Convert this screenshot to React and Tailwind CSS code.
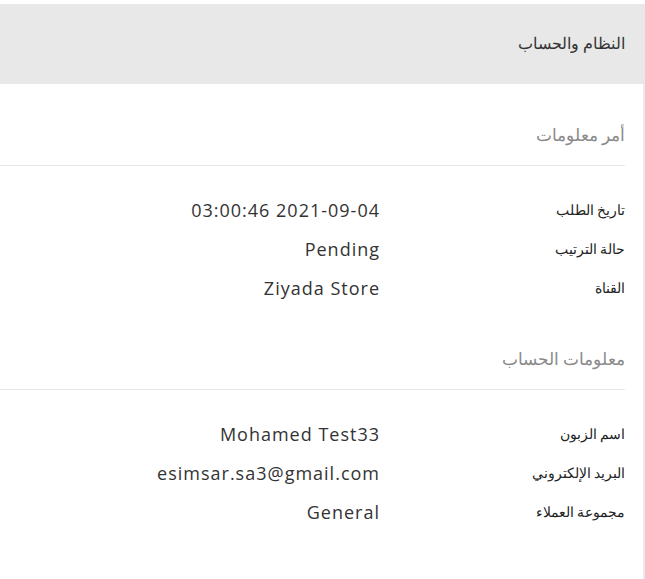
export default function App() {
  const order = [
    ["تاريخ الطلب", "03:00:46 2021-09-04"],
    ["حالة الترتيب", "Pending"],
    ["القناة", "Ziyada Store"],
  ];
  const account = [
    ["اسم الزبون", "Mohamed Test33"],
    ["البريد الإلكتروني", "esimsar.sa3@gmail.com"],
    ["مجموعة العملاء", "General"],
  ];
  const Section = ({ title, rows }) => (
    <div>
      <div className="pt-[38px] pb-[16px] border-b border-[#e8e8e8]">
        <div className="text-[17px] leading-[27px] text-[#8a8a8a] font-['Liberation_Serif',serif]">{title}</div>
      </div>
      <div className="pt-[25px]">
        {rows.map(([l, v]) => (
          <div key={l} className="flex h-[39px] items-center">
            <div className="w-[245px] text-[14px] text-[#222] font-['Liberation_Serif',serif]">{l}</div>
            <div className="text-[18px] text-[#333] font-['Open_Sans',sans-serif] tracking-[1px]" dir="ltr">{v}</div>
          </div>
        ))}
      </div>
    </div>
  );
  return (
    <div dir="rtl" className="w-[645px] h-[579px] bg-white overflow-hidden pt-[4px]">
      <div className="h-[80px] bg-[#e8e8e8] flex items-center pr-[20px]">
        <div className="text-[16px] text-[#333] font-['Liberation_Serif',serif]">النظام والحساب</div>
      </div>
      <div className="flex h-[495px]">
        <div className="w-[2px] bg-[#ececec]" />
        <div className="w-[625px] mr-[18px]">
          <Section title="أمر معلومات" rows={order} />
          <Section title="معلومات الحساب" rows={account} />
        </div>
      </div>
    </div>
  );
}
